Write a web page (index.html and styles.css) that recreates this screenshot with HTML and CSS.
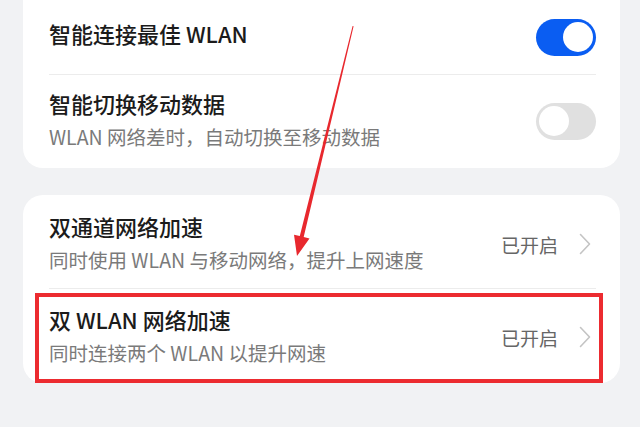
FILE: index.html
```html
<!DOCTYPE html>
<html lang="zh-CN">
<head>
    <meta charset="UTF-8">
    <meta name="viewport" content="width=device-width, initial-scale=1.0">
    <title>WLAN 设置</title>
    <link rel="stylesheet" href="styles.css">
</head>
<body>
    <div class="page">
        <div class="card card-top">
            <div class="row row-first">
                <div class="text">
                    <div class="title">智能连接最佳 WLAN</div>
                </div>
                <div class="switch on"><span class="knob"></span></div>
            </div>
            <div class="divider"></div>
            <div class="row row-second">
                <div class="text">
                    <div class="title">智能切换移动数据</div>
                    <div class="sub">WLAN 网络差时，自动切换至移动数据</div>
                </div>
                <div class="switch"><span class="knob"></span></div>
            </div>
        </div>

        <div class="card">
            <div class="row row-link">
                <div class="text">
                    <div class="title">双通道网络加速</div>
                    <div class="sub">同时使用 WLAN 与移动网络，提升上网速度</div>
                </div>
                <div class="state">已开启</div>
                <svg class="chevron" width="18" height="22" viewBox="0 0 18 22">
                    <polyline points="1.5,1.5 10.5,11 1.5,20.5" fill="none" stroke="#c4c4c4" stroke-width="1.6" stroke-linecap="round" stroke-linejoin="round"/>
                </svg>
            </div>
            <div class="divider"></div>
            <div class="row row-link row-last">
                <div class="text">
                    <div class="title">双 WLAN 网络加速</div>
                    <div class="sub">同时连接两个 WLAN 以提升网速</div>
                </div>
                <div class="state">已开启</div>
                <svg class="chevron" width="18" height="22" viewBox="0 0 18 22">
                    <polyline points="1.5,1.5 10.5,11 1.5,20.5" fill="none" stroke="#c4c4c4" stroke-width="1.6" stroke-linecap="round" stroke-linejoin="round"/>
                </svg>
                <div class="highlight"></div>
            </div>
        </div>
    </div>

    <svg class="arrow" width="640" height="427" viewBox="0 0 640 427">
        <polygon points="352.6,26 353.6,26.2 303.7,237.1 309.5,238.6 297,256 294,234.7 299.8,236.1" fill="#e8282e"/>
    </svg>
</body>
</html>
```

FILE: styles.css
```css
*{
    margin: 0;
    padding: 0;
    box-sizing: border-box;
}

body{
    background-color: #f1f2f4;
    font-family: "Noto Sans CJK SC", "Noto Sans", sans-serif;
    overflow: hidden;
}

.page{
    display: flex;
    flex-direction: column;
    gap: 27px;
    padding: 0 20px 0 23px;
}

.card{
    background-color: #ffffff;
    border-radius: 20px;
    padding: 0 24px 0 26px;
}

.card-top{
    margin-top: -24px;
    padding-top: 24px;
}

.row{
    position: relative;
    display: flex;
    align-items: center;
}

.row-first{
    height: 74px;
}

.row-second{
    padding: 16px 0 17px;
}

.row-link{
    padding: 19px 0 14px;
}

.row-last{
    padding: 18px 0 16px;
}

.text{
    flex: 1;
}

.title{
    margin-top: -3px;
    margin-bottom: 5px;
    font-size: 22px;
    line-height: 30px;
    font-weight: 500;
    color: #1b1b1b;
}

.sub{
    font-size: 19.5px;
    line-height: 28px;
    color: #7a7a7a;
}

.divider{
    height: 1px;
    background-color: #ececec;
}

.switch{
    width: 60px;
    height: 37px;
    border-radius: 19px;
    background-color: #e0e0e0;
    padding: 3.5px 3px;
    display: flex;
}

.switch .knob{
    width: 30px;
    height: 30px;
    border-radius: 50%;
    background-color: #ffffff;
}

.switch.on{
    background-color: #0a5df2;
    justify-content: flex-end;
}

.state{
    font-size: 19px;
    color: #666666;
    margin-right: 21px;
}

.chevron{
    margin-right: -1px;
}

.highlight{
    position: absolute;
    left: -14px;
    right: -7px;
    top: 4px;
    bottom: 0;
    border: 4px solid #ec2b30;
}

.arrow{
    position: absolute;
    left: 0;
    top: 0;
}
```
